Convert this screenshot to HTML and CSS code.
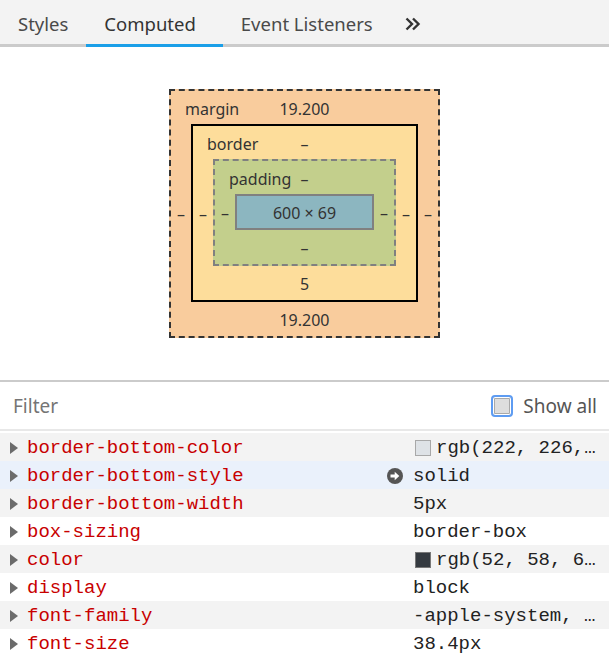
FILE: index.html
```html
<!DOCTYPE html>
<html>
<head>
<meta charset="utf-8">
<link rel="stylesheet" href="styles.css">
</head>
<body>
<div class="tabs">
  <div class="tab">Styles</div>
  <div class="tab active">Computed</div>
  <div class="tab">Event Listeners</div>
  <div class="tab more">
    <svg width="20" height="16" viewBox="0 0 20 16"><path d="M3.5 2.5l5.5 5.5-5.5 5.5M10 2.5l5.5 5.5-5.5 5.5" fill="none" stroke="#333" stroke-width="2.4"/></svg>
  </div>
</div>

<div class="boxarea">
  <div class="bm bm-margin">
    <span class="bm-label">margin</span>
    <div class="bm-top">19.200</div>
    <div class="bm-side">–</div>
    <div class="bm bm-border">
      <span class="bm-label">border</span>
      <div class="bm-top">–</div>
      <div class="bm-side">–</div>
      <div class="bm bm-padding">
        <span class="bm-label">padding</span>
        <div class="bm-top">–</div>
        <div class="bm-side">–</div>
        <div class="bm-content">600 × 69</div>
        <div class="bm-side">–</div>
        <div class="bm-bottom">–</div>
      </div>
      <div class="bm-side">–</div>
      <div class="bm-bottom">5</div>
    </div>
    <div class="bm-side">–</div>
    <div class="bm-bottom">19.200</div>
  </div>
</div>

<div class="filterbar">
  <span class="filter">Filter</span>
  <label class="showall"><span class="check"></span>Show all</label>
</div>

<div class="props">
  <div class="row odd"><span class="tri"></span><span class="name">border-bottom-color</span><span class="ic"></span><span class="val"><span class="sw light"></span>rgb(222, 226,…</span></div>
  <div class="row hover"><span class="tri"></span><span class="name">border-bottom-style</span><span class="ic"><svg width="16" height="16" viewBox="0 0 16 16"><circle cx="8" cy="8" r="8" fill="#555"/><path d="M3.5 6.6h4.2V3.8L12.3 8l-4.6 4.2V9.4H3.5z" fill="#fff"/></svg></span><span class="val">solid</span></div>
  <div class="row odd"><span class="tri"></span><span class="name">border-bottom-width</span><span class="ic"></span><span class="val">5px</span></div>
  <div class="row"><span class="tri"></span><span class="name">box-sizing</span><span class="ic"></span><span class="val">border-box</span></div>
  <div class="row odd"><span class="tri"></span><span class="name">color</span><span class="ic"></span><span class="val"><span class="sw dark"></span>rgb(52, 58, 6…</span></div>
  <div class="row"><span class="tri"></span><span class="name">display</span><span class="ic"></span><span class="val">block</span></div>
  <div class="row odd"><span class="tri"></span><span class="name">font-family</span><span class="ic"></span><span class="val">-apple-system, …</span></div>
  <div class="row"><span class="tri"></span><span class="name">font-size</span><span class="ic"></span><span class="val">38.4px</span></div>
</div>
</body>
</html>
```

FILE: styles.css
```css
* { box-sizing: border-box; }
html, body { margin: 0; padding: 0; background: #fff; }
body {
  width: 609px;
  font-family: "Noto Sans", "Open Sans", sans-serif;
  color: #333;
  overflow: hidden;
}

.tabs {
  display: flex;
  height: 47px;
  background: #f3f3f3;
  border-bottom: 3px solid #cbcbcb;
}
.tab {
  padding: 3px 18px 0;
  font-size: 18.5px;
  line-height: 41px;
  color: #4a4a4a;
  margin-bottom: -3px;
  border-bottom: 3px solid transparent;
}
.tab.active {
  color: #333;
  border-bottom-color: #1a9fe8;
  padding-right: 27px;
}
.tab.more {
  display: flex;
  align-items: center;
  padding: 3px 0 0 12px;
}

.boxarea {
  height: 333px;
  display: flex;
  justify-content: center;
  align-items: center;
}
.bm {
  position: relative;
  display: grid;
  grid-template-columns: 20px auto 20px;
  grid-template-rows: 33px auto 34px;
  font-size: 16px;
  color: #333;
}
.bm-margin {
  background: #f9cc9d;
  border: 2px dashed #333;
}
.bm-border {
  background: #fddd9b;
  border: 2px solid #000;
}
.bm-padding {
  background: #c3cf8c;
  border: 2px dashed #808080;
}
.bm-label {
  position: absolute;
  left: 14px;
  top: 0;
  padding-top: 2px;
  line-height: 33px;
}
.bm-top, .bm-bottom {
  grid-column: 1 / 4;
  display: flex;
  align-items: center;
  justify-content: center;
  padding-top: 2px;
}
.bm-side {
  display: flex;
  align-items: center;
  justify-content: center;
  padding-top: 2px;
}
.bm-content {
  width: 139px;
  height: 36px;
  background: #8cb6c0;
  border: 2px solid #808080;
  display: flex;
  align-items: center;
  justify-content: center;
  padding-top: 1px;
}

.filterbar {
  height: 51px;
  border-top: 2px solid #cbcbcb;
  border-bottom: 2px solid #e8e8e8;
  margin-bottom: 2px;
  display: flex;
  align-items: center;
  justify-content: space-between;
  padding: 0 12px 0 13px;
  font-size: 19px;
}
.filter { color: #757575; }
.showall {
  display: flex;
  align-items: center;
  color: #555;
}
.check {
  width: 22px;
  height: 22px;
  border: 2px solid #5e9cf2;
  border-radius: 4px;
  background: #dedede;
  box-shadow: inset 0 0 0 1px #fff, inset 0 0 0 2px #a9a9a9;
  margin-right: 10px;
}

.props {
  font-family: "Liberation Mono", "DejaVu Sans Mono", monospace;
  font-size: 19px;
}
.row {
  display: grid;
  grid-template-columns: 27px 1fr 26px 196px;
  align-items: center;
  height: 28px;
  padding-top: 1px;
  background: #fff;
}
.row.odd { background: #f3f3f3; }
.row.hover { background: #eaf1fb; }
.tri {
  width: 0;
  height: 0;
  margin-left: 10px;
  border-left: 8px solid #6b6b6b;
  border-top: 6px solid transparent;
  border-bottom: 6px solid transparent;
}
.name { color: #c80000; }
.ic { display: flex; align-items: center; }
.val {
  color: #222;
  display: flex;
  align-items: center;
  white-space: nowrap;
}
.sw {
  width: 16px;
  height: 16px;
  margin: 0 5px 0 2px;
  border: 1px solid #a8a8a8;
}
.sw.light { background: #dee2e6; }
.sw.dark { background: #343a40; border-color: #777; }
```
